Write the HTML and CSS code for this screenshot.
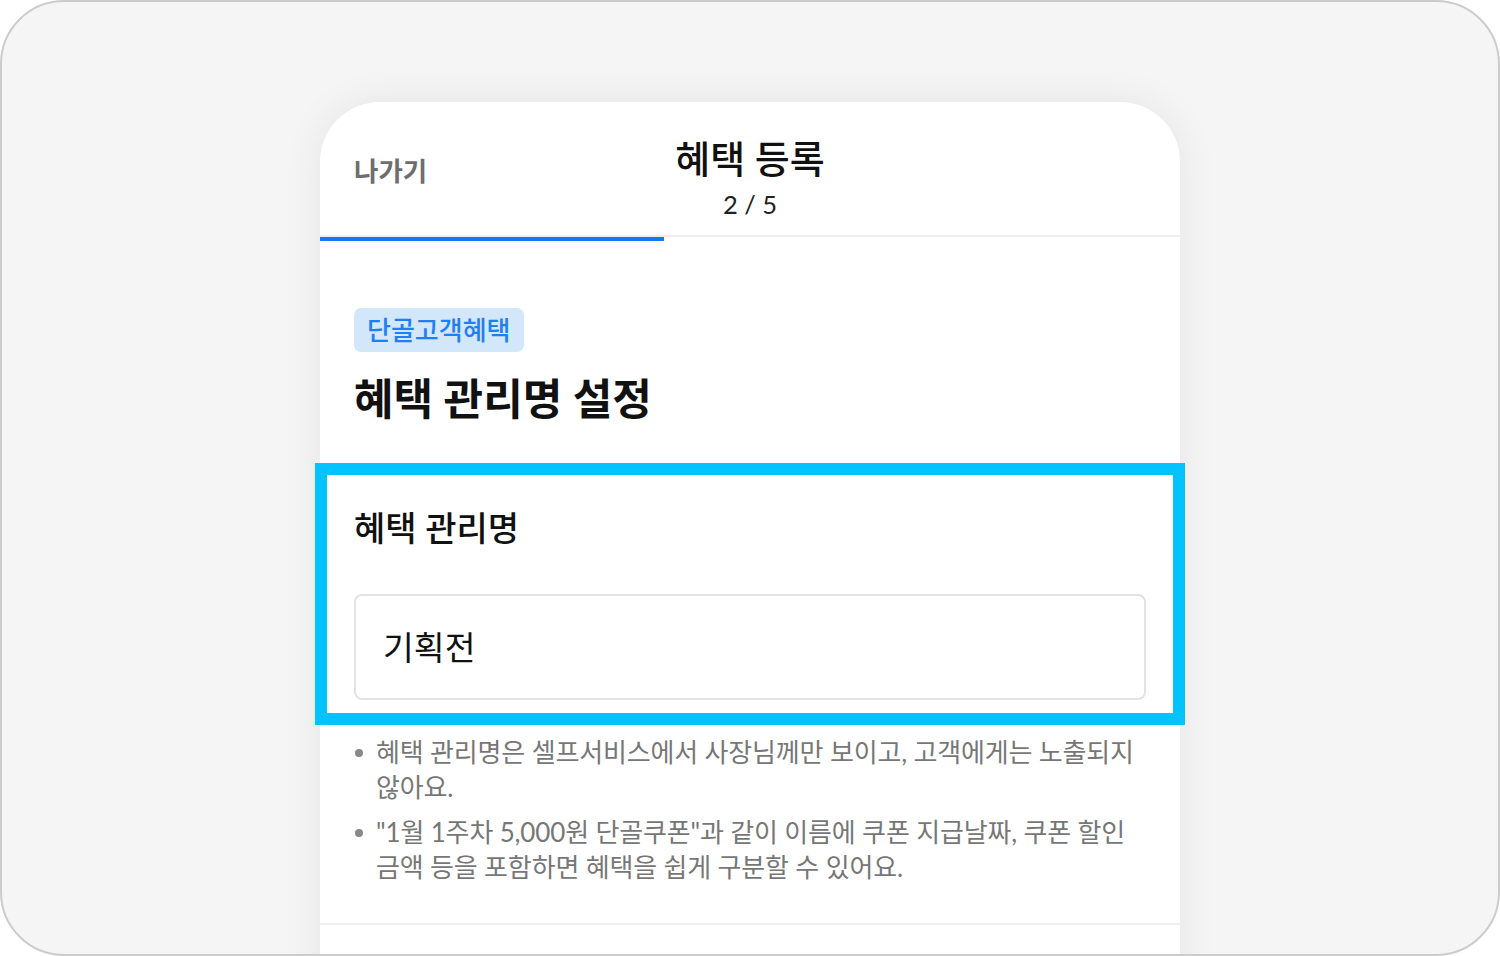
FILE: index.html
```html
<!DOCTYPE html>
<html lang="ko">
<head>
<meta charset="utf-8">
<title>혜택 등록</title>
<link rel="stylesheet" href="styles.css">
</head>
<body>
<div class="frame">
  <div class="card">
    <header class="header">
      <div class="exit">나가기</div>
      <div class="title-block">
        <div class="title">혜택 등록</div>
        <div class="step">2 / 5</div>
      </div>
      <div></div>
    </header>
    <div class="progress"><div class="progress-fill"></div></div>
    <main class="content">
      <span class="tag">단골고객혜택</span>
      <h1 class="heading">혜택 관리명 설정</h1>
      <section class="field">
        <h2 class="field-title">혜택 관리명</h2>
        <div class="input">기획전</div>
      </section>
      <ul class="notes">
        <li>혜택 관리명은 셀프서비스에서 사장님께만 보이고, 고객에게는 노출되지 않아요.</li>
        <li>"1월 1주차 5,000원 단골쿠폰"과 같이 이름에 쿠폰 지급날짜, 쿠폰 할인 금액 등을 포함하면 혜택을 쉽게 구분할 수 있어요.</li>
      </ul>
    </main>
    <div class="divider"></div>
  </div>
</div>
</body>
</html>
```

FILE: styles.css
```css
* { box-sizing: border-box; }
html, body { margin: 0; padding: 0; }
body {
  width: 1500px;
  height: 956px;
  font-family: "Lato", "Noto Sans CJK KR", sans-serif;
  color: #111;
}
.frame {
  width: 1500px;
  height: 956px;
  border: 2px solid #cccccc;
  border-radius: 64px;
  background: #f5f5f5;
  overflow: hidden;
  padding-top: 100px;
}
.card {
  width: 860px;
  height: 900px;
  margin: 0 auto;
  background: #fff;
  border-radius: 60px 60px 0 0;
  box-shadow: 0 0 40px rgba(0, 0, 0, 0.07);
}
.header {
  height: 135px;
  display: grid;
  grid-template-columns: 1fr auto 1fr;
  align-items: start;
  padding: 34px 34px 0;
  border-bottom: 2px solid #eeeeee;
}
.exit {
  margin-top: 18px;
  font-size: 26.5px;
  line-height: 34px;
  font-weight: 700;
  color: #6e6e6e;
}
.title-block { text-align: center; }
.title {
  font-size: 38px;
  line-height: 44px;
  font-weight: 500;
  color: #111;
}
.step {
  margin-top: 7px;
  font-size: 25.5px;
  line-height: 34px;
  color: #222;
}
.progress { height: 4px; background: #fff; }
.progress-fill { width: 40%; height: 4px; background: #1a76ef; }
.content { padding: 67px 34px 38px; }
.tag {
  display: inline-block;
  height: 44px;
  padding: 0 13px;
  line-height: 44px;
  font-size: 26px;
  font-weight: 500;
  color: #1f7ff0;
  background: #d3e7fb;
  border-radius: 7px;
}
.heading {
  margin: 21px 0 0;
  font-size: 43px;
  line-height: 52px;
  font-weight: 700;
  color: #111;
}
.field {
  position: relative;
  margin: 50px 0 0;
  padding: 33px 0 13px;
}
.field::after {
  content: "";
  position: absolute;
  left: -39px;
  right: -39px;
  top: -12px;
  bottom: -12px;
  border: 12px solid #00c3ff;
  pointer-events: none;
}
.field-title {
  margin: 0;
  font-size: 34px;
  line-height: 40px;
  font-weight: 500;
  color: #111;
}
.input {
  margin-top: 46px;
  height: 106px;
  border: 2px solid #e3e3e3;
  border-radius: 8px;
  padding: 0 27px 4px;
  display: flex;
  align-items: center;
  font-size: 33.5px;
  color: #111;
}
.notes {
  list-style: none;
  margin: 22px 0 0;
  padding: 0;
}
.notes li {
  position: relative;
  padding-left: 22px;
  font-size: 26px;
  line-height: 35px;
  letter-spacing: -0.15px;
  color: #777;
}
.notes li + li { margin-top: 10px; }
.notes li::before {
  content: "";
  position: absolute;
  left: 1px;
  top: 14px;
  width: 8px;
  height: 8px;
  border-radius: 50%;
  background: #888;
}
.divider { height: 2px; background: #f0f0f0; }
```
